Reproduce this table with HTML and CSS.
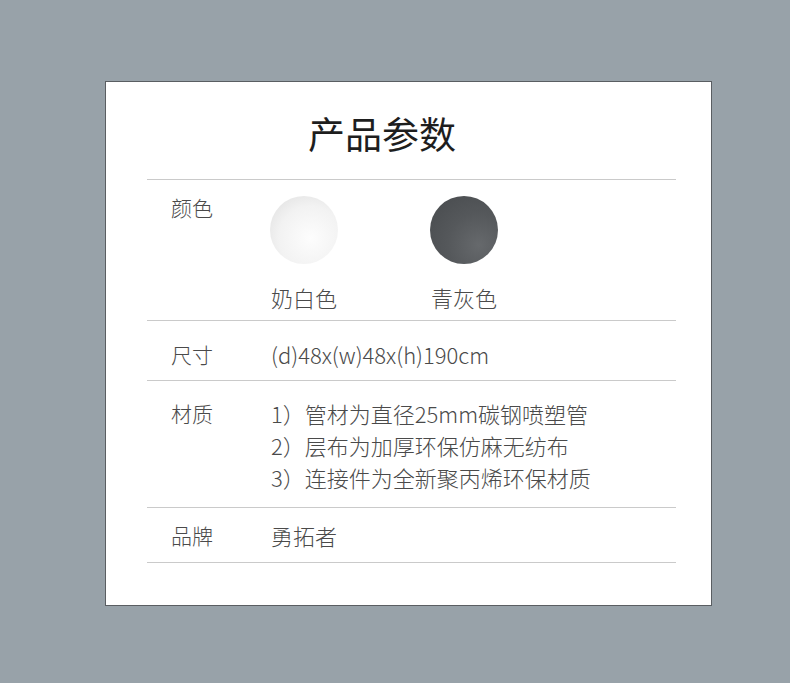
FILE: index.html
```html
<!DOCTYPE html>
<html lang="zh-CN">
    <head>
        <meta charset="UTF-8" />
        <meta name="viewport" content="width=device-width, initial-scale=1.0" />
        <title>产品参数</title>
        <link rel="stylesheet" href="styles.css">
    </head>
    <body>
        <div class="spec-card">
            <h1 class="spec-title">产品参数</h1>

            <!-- 颜色 -->
            <div class="spec-row row-color">
                <div class="spec-label">颜色</div>
                <div class="swatches">
                    <div class="swatch">
                        <div class="swatch-dot dot-white"></div>
                        <div class="swatch-name">奶白色</div>
                    </div>
                    <div class="swatch">
                        <div class="swatch-dot dot-grey"></div>
                        <div class="swatch-name">青灰色</div>
                    </div>
                </div>
            </div>

            <!-- 尺寸 -->
            <div class="spec-row row-size">
                <div class="spec-label">尺寸</div>
                <div class="spec-value">(d)48x(w)48x(h)190cm</div>
            </div>

            <!-- 材质 -->
            <div class="spec-row row-material">
                <div class="spec-label">材质</div>
                <div class="spec-value">
                    <div>1）管材为直径25mm碳钢喷塑管</div>
                    <div>2）层布为加厚环保仿麻无纺布</div>
                    <div>3）连接件为全新聚丙烯环保材质</div>
                </div>
            </div>

            <!-- 品牌 -->
            <div class="spec-row row-brand">
                <div class="spec-label">品牌</div>
                <div class="spec-value">勇拓者</div>
            </div>
        </div>
    </body>
</html>
```

FILE: styles.css
```css
body {
    margin: 0;
    background-color: #98a2a9;
    font-family: "Noto Sans CJK SC", "Noto Sans", sans-serif;
    color: #444;
}

.spec-card {
    box-sizing: border-box;
    width: 607px;
    height: 525px;
    margin: 81px 0 0 105px;
    padding: 0 35px 0 41px;
    background: #fff;
    border: 1px solid #5a5e62;
}

.spec-title {
    margin: 0;
    height: 97px;
    padding-left: 161px;
    font-size: 37px;
    font-weight: 400;
    line-height: 102px;
    color: #1e1e1e;
    border-bottom: 1px solid #cacaca;
}

.spec-row {
    display: grid;
    grid-template-columns: 100px 1fr;
    box-sizing: border-box;
    padding-left: 24px;
    font-weight: 300;
    border-bottom: 1px solid #cacaca;
}

.spec-label {
    font-size: 21px;
    line-height: 28px;
    color: #4a4a4a;
}

.spec-value {
    font-size: 22px;
    line-height: 28px;
    color: #4a4a4a;
}

.row-color {
    height: 141px;
    padding-top: 13px;
}

.swatches {
    display: flex;
    font-size: 22px;
    line-height: 28px;
    color: #4a4a4a;
}

.swatch {
    width: 160px;
    padding-top: 3px;
}

.swatch-dot {
    width: 68px;
    height: 68px;
    border-radius: 50%;
    margin-left: -1px;
}

.dot-white {
    background: radial-gradient(circle at 60% 62%, #fdfdfd 0%, #f2f2f2 55%, #dcdcdc 100%);
}

.dot-grey {
    background: radial-gradient(circle at 72% 72%, #66696c 0%, #55585b 45%, #474a4d 100%);
}

.swatch-name {
    margin-top: 19px;
}

.row-size {
    height: 60px;
    padding-top: 19px;
}

.row-material {
    height: 127px;
    padding-top: 16px;
}

.row-material .spec-label,
.row-material .spec-value {
    line-height: 32px;
}

.row-brand {
    height: 55px;
    padding-top: 13px;
}
```
